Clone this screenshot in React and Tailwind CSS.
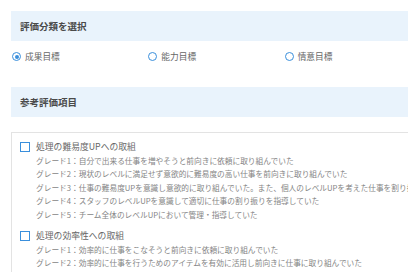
import React from 'react';

const font = { fontFamily: '"Noto Sans CJK JP", "Noto Sans", sans-serif' };

const radios = [
  { label: '成果目標', checked: true },
  { label: '能力目標', checked: false },
  { label: '情意目標', checked: false },
];

const items = [
  {
    title: '処理の難易度UPへの取組',
    grades: [
      'グレード1：自分で出来る仕事を増やそうと前向きに依頼に取り組んでいた',
      'グレード2：現状のレベルに満足せず意欲的に難易度の高い仕事を前向きに取り組んでいた',
      'グレード3：仕事の難易度UPを意識し意欲的に取り組んでいた。また、個人のレベルUPを考えた仕事を割り振りしていた',
      'グレード4：スタッフのレベルUPを意識して適切に仕事の割り振りを指導していた',
      'グレード5：チーム全体のレベルUPにおいて管理・指導していた',
    ],
  },
  {
    title: '処理の効率性への取組',
    grades: [
      'グレード1：効率的に仕事をこなそうと前向きに依頼に取り組んでいた',
      'グレード2：効率的に仕事を行うためのアイテムを有効に活用し前向きに仕事に取り組んでいた',
      'グレード3：仕事の効率化を意識し意欲的に取り組んでいた',
    ],
  },
];

const SectionHeader = ({ children }) => (
  <div className="h-[30px] bg-[#e9f3fc] flex items-center pl-[9px] text-[9.5px] font-bold text-[#4a4a4a]">
    {children}
  </div>
);

export default function App() {
  return (
    <div className="w-[408px] h-[272px] overflow-hidden bg-white" style={font}>
      <div className="w-[420px] pl-[11px] pt-[11px]">
        <SectionHeader>評価分類を選択</SectionHeader>

        {/* radio row */}
        <div className="flex h-[32px] items-center">
          {radios.map((r) => (
            <div key={r.label} className="w-[140px] flex items-center gap-[4px] pl-[1px]">
              <span className="w-[9px] h-[9px] rounded-full border-[1.5px] border-[#3a8fdc] flex items-center justify-center">
                {r.checked && <span className="w-[4px] h-[4px] rounded-full bg-[#3a8fdc]" />}
              </span>
              <span className="text-[8.7px] text-[#666]">{r.label}</span>
            </div>
          ))}
        </div>

        <div className="mt-[14px]">
          <SectionHeader>参考評価項目</SectionHeader>
        </div>

        {/* card */}
        <div className="mt-[15px] border border-[#e3e3e3] pl-[8px] pt-[7px] pb-4">
          {items.map((it, i) => (
            <div key={it.title} className={i > 0 ? 'mt-[8px]' : ''}>
              <div className="flex items-center h-[14px]">
                <span className="w-[10px] h-[10px] border-[1.5px] border-[#3a8fdc] bg-white shrink-0" />
                <span className="ml-[6px] text-[8.8px] text-[#666]">{it.title}</span>
              </div>
              <div className="pl-[16px]">
                {it.grades.map((g) => (
                  <div key={g} className="h-[13.4px] leading-[13.4px] text-[7.7px] text-[#858585] whitespace-nowrap">
                    {g}
                  </div>
                ))}
              </div>
            </div>
          ))}
        </div>
      </div>
    </div>
  );
}
